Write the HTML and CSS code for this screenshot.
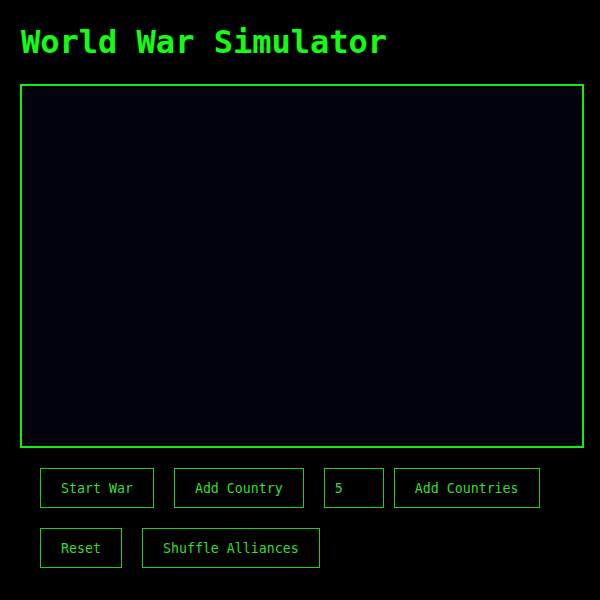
FILE: index.html
```html
<!DOCTYPE html>
<html>
<head>
<meta charset="utf-8">
<link rel="stylesheet" href="styles.css">
</head>
<body>
<h1 class="title">World War Simulator</h1>
<div class="map"></div>
<div class="controls">
  <div class="row">
    <button class="btn">Start War</button>
    <button class="btn">Add Country</button>
    <input class="count" type="text" value="5">
    <button class="btn btn-tight">Add Countries</button>
  </div>
  <div class="row">
    <button class="btn">Reset</button>
    <button class="btn">Shuffle Alliances</button>
  </div>
</div>
</body>
</html>
```
FILE: styles.css
```css
html, body {
  margin: 0;
  background: #000;
}
body {
  padding: 20px;
  font-family: "DejaVu Sans Mono", "Liberation Mono", monospace;
  color: #22ee22;
}
.title {
  margin: 0 0 20px 1px;
  font-size: 32px;
  line-height: 44px;
  font-weight: bold;
  color: #11ff11;
}
.map {
  width: 560px;
  height: 360px;
  border: 2px solid #11ee11;
  background: #02020f;
}
.controls {
  padding: 10px;
}
.row {
  display: flex;
  align-items: center;
}
.btn {
  margin: 10px;
  height: 40px;
  padding: 0 20px;
  background: #000;
  border: 1px solid #22cc22;
  color: #33dd33;
  font-family: "DejaVu Sans Mono", "Liberation Mono", monospace;
  font-size: 13.28px;
}
.btn-tight {
  margin-left: 10px;
}
.count {
  box-sizing: border-box;
  margin: 10px 0 10px 10px;
  width: 60px;
  height: 40px;
  padding: 0 10px;
  background: #000;
  border: 1px solid #22cc22;
  color: #33dd33;
  font-family: "DejaVu Sans Mono", "Liberation Mono", monospace;
  font-size: 13.28px;
  outline: none;
}
```
